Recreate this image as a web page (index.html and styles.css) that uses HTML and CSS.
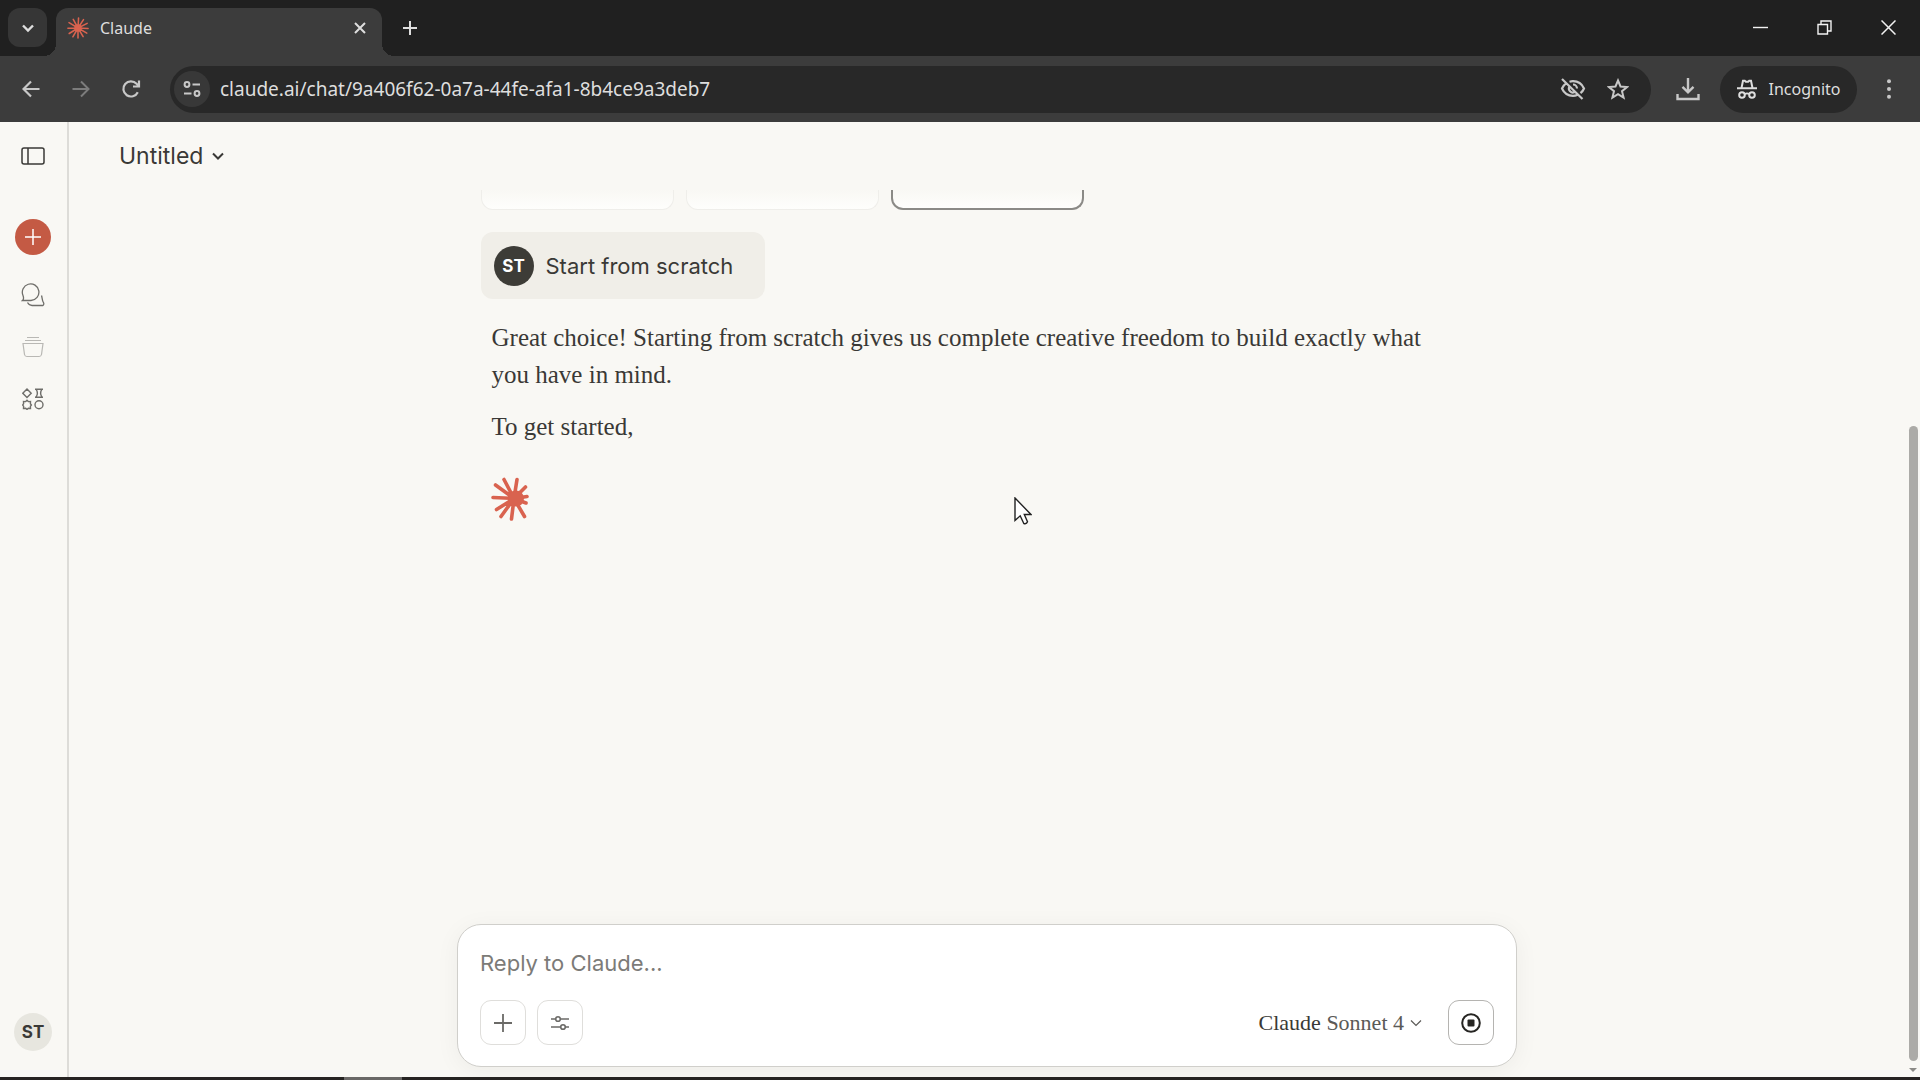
FILE: index.html
```html
<!DOCTYPE html>
<html lang="en">
<head>
    <meta charset="UTF-8">
    <meta name="viewport" content="width=device-width, initial-scale=1.0">
    <title>Claude</title>
    <link rel="stylesheet" href="styles.css">
</head>
<body>

    <!-- tab strip -->
    <header class="tab-strip">
        <button class="tab-search" aria-label="Search tabs">
            <svg width="14" height="14" viewBox="0 0 14 14"><path d="M2 4.5l5 5 5-5" stroke-width="2.4"/></svg>
        </button>
        <div class="tab">
            <svg class="burst" width="22" height="22" viewBox="0 0 24 24" stroke-width="1.7">
                <path d="M12 12L12.6 1M12 12L18 2.8M12 12L22 7M12 12L23 12.6M12 12L21.6 17.6M12 12L17.6 21.4M12 12L12 23M12 12L6.4 21.6M12 12L2.4 18M12 12L1 12.2M12 12L2.2 6.2M12 12L6.8 2.6"/>
                <circle cx="12" cy="12" r="4"/>
            </svg>
            <span class="tab-title">Claude</span>
            <button class="tab-close" aria-label="Close tab">
                <svg width="12" height="12" viewBox="0 0 12 12"><path d="M1 1l10 10M11 1L1 11" stroke-width="2"/></svg>
            </button>
        </div>
        <button class="new-tab" aria-label="New tab">
            <svg width="14" height="14" viewBox="0 0 14 14"><path d="M7 0v14M0 7h14" stroke-width="2"/></svg>
        </button>
        <div class="window-controls">
            <button aria-label="Minimize">
                <svg width="15" height="15" viewBox="0 0 15 15"><path d="M0 7.5h15" stroke-width="1.4"/></svg>
            </button>
            <button aria-label="Restore">
                <svg width="15" height="15" viewBox="0 0 15 15"><path d="M1 4.5h9.5V14H1zM4 4.5V1h10v10h-3.5" stroke-width="1.4"/></svg>
            </button>
            <button aria-label="Close">
                <svg width="15" height="15" viewBox="0 0 15 15"><path d="M.5.5l14 14M14.5.5l-14 14" stroke-width="1.5"/></svg>
            </button>
        </div>
    </header>

    <!-- toolbar -->
    <nav class="toolbar">
        <button class="tool" aria-label="Back">
            <svg width="18" height="18" viewBox="0 0 18 18"><path d="M17.5 9H2M9 1.5L1.5 9 9 16.5" stroke-width="2.2"/></svg>
        </button>
        <button class="tool disabled" aria-label="Forward" disabled>
            <svg width="18" height="18" viewBox="0 0 18 18"><path d="M.5 9H16M9 1.5L16.5 9 9 16.5" stroke-width="2"/></svg>
        </button>
        <button class="tool" aria-label="Reload">
            <svg width="20" height="20" viewBox="0 0 20 20"><path d="M16.8 13.2A7.6 7.6 0 1 1 15.6 4.8L18 7.2M18 1.5v6h-6" stroke-width="2.2"/></svg>
        </button>
        <div class="omnibox">
            <button class="site-info" aria-label="View site information">
                <svg width="18" height="18" viewBox="0 0 18 18" stroke-width="2"><circle cx="4" cy="4.5" r="2.4"/><path d="M9.5 4.5H17M1 13.5h7.5"/><circle cx="14" cy="13.5" r="2.4"/></svg>
            </button>
            <input type="text" aria-label="Address" value="claude.ai/chat/9a406f62-0a7a-44fe-afa1-8b4ce9a3deb7">
            <button class="box-icon" aria-label="Third-party cookies blocked">
                <svg width="26" height="24" viewBox="0 0 26 24" stroke-width="2.2"><path d="M2 2l20.5 20M9.5 4.7A12 12 0 0 1 13 4.2c5 0 9 2.8 11 7.3a12 12 0 0 1-3.5 4.7M6 6.3a12 12 0 0 0-4 5.2c2 4.5 6 7.3 11 7.3 1.5 0 3-.3 4.2-.8M13 7.5a4 4 0 0 1 4 4M9.2 10a4 4 0 0 0 5.2 5.2"/></svg>
            </button>
            <button class="box-icon" aria-label="Bookmark this tab">
                <svg width="22" height="22" viewBox="0 0 22 22" stroke-width="2"><path d="M11 2.5l2.5 6 6.5.5-5 4.2 1.6 6.4L11 16.2l-5.6 3.4L7 13.2 2 9l6.5-.5z"/></svg>
            </button>
        </div>
        <div class="toolbar-end">
            <button class="tool" aria-label="Downloads">
                <svg width="24" height="24" viewBox="0 0 24 24"><path d="M12 1v14M6.5 9.8L12 15.3l5.5-5.5M1.5 17v5h21v-5" stroke-width="2.4"/></svg>
            </button>
            <button class="incognito">
                <svg width="20" height="20" viewBox="0 0 20 20" stroke-width="2"><path d="M0 9.2h20M4.5 9L6 1.8h1.8l1 .9h2.4l1-.9H14L15.5 9M8 15.2c1-1 3-1 4 0"/><circle cx="5" cy="16" r="2.8"/><circle cx="15" cy="16" r="2.8"/></svg>
                Incognito
            </button>
            <button class="tool" aria-label="Menu">
                <svg class="solid" width="20" height="20" viewBox="0 0 20 20"><circle cx="10" cy="2.2" r="2"/><circle cx="10" cy="10" r="2"/><circle cx="10" cy="17.8" r="2"/></svg>
            </button>
        </div>
    </nav>

    <div class="app">
        <aside class="sidebar">
            <button class="toggle" aria-label="Open sidebar">
                <svg width="24" height="18" viewBox="0 0 24 18" stroke-width="1.5"><rect x="1" y="1" width="22" height="16" rx="2"/><path d="M7 1v16"/></svg>
            </button>
            <button class="new-chat" aria-label="New chat">
                <svg width="16" height="16" viewBox="0 0 16 16" stroke-width="1.5"><path d="M8 0v16M0 8h16"/></svg>
            </button>
            <a class="nav-item" href="#" aria-label="Chats">
                <svg width="24" height="24" viewBox="0 0 24 24" stroke-width="1.3"><path d="M1.5 17.5C3 16 2.6 14 2 12.5A8.3 8.3 0 1 1 10 17.5zM20.5 12.5c.9 2.5.4 5 2 7.2.7 1 0 2.5-.6 2.8H11c-2 0-3.5-1.3-4.5-3"/></svg>
            </a>
            <a class="nav-item faded" href="#" aria-label="Projects">
                <svg width="22" height="22" viewBox="0 0 22 22" stroke-width="1.2"><path d="M5 1.5h12M3 4.5h16M1 7.5h20l-1.5 11a2.5 2.5 0 0 1-2.5 2H5a2.5 2.5 0 0 1-2.5-2z"/></svg>
            </a>
            <a class="nav-item" href="#" aria-label="Artifacts">
                <svg width="22" height="22" viewBox="0 0 22 22" stroke-width="1.4"><path d="M5 1l4.2 4.2L5 9.4.8 5.2zM13 1.2h8M13 9.2h8M14 1.2c1.8 2.6 1.8 5.4 0 8M20 1.2c-1.8 2.6-1.8 5.4 0 8M5 12.3l1.3 1.3 2.2-.1-.1 2.2 1 1.3-1 1.2.1 2.2-2.2-.1L5 21.5l-1.3-1.2-2.2.1.1-2.2-1-1.2 1-1.3-.1-2.2 2.2.1z"/><circle cx="17" cy="16.8" r="4"/></svg>
            </a>
            <button class="account">ST</button>
        </aside>

        <main class="chat">
            <div class="chat-header">
                <button class="chat-title">
                    Untitled
                    <svg width="14" height="10" viewBox="0 0 14 10" stroke-width="2"><path d="M2 2.5l5 5 5-5"/></svg>
                </button>
            </div>

            <section class="messages">
                <div class="options">
                    <div class="option"></div>
                    <div class="option"></div>
                    <div class="option selected"></div>
                </div>
                <div class="user-message">
                    <span class="avatar">ST</span>
                    <p>Start from scratch</p>
                </div>
                <div class="reply">
                    <p>Great choice! Starting from scratch gives us complete creative freedom to build exactly what you have in mind.</p>
                    <p>To get started,</p>
                </div>
                <svg class="burst thinking" width="38" height="44" viewBox="0 0 38 44" stroke-width="3.6">
                    <path d="M23 21.5L13 2.5M23 21.5L26 2.5M23 21.5L34.5 10M23 21.5L36 19.5M23 21.5L35 26M23 21.5L33.5 39.5M23 21.5L20.5 42M23 21.5L10 39.5M23 21.5L5.5 32.5M23 21.5L2 20.5M23 21.5L4.5 8"/>
                    <circle cx="25" cy="21.5" r="8"/>
                </svg>
            </section>

            <form class="composer">
                <textarea rows="1" aria-label="Message" placeholder="Reply to Claude..."></textarea>
                <div class="composer-bar">
                    <button type="button" class="square" aria-label="Add content">
                        <svg width="18" height="18" viewBox="0 0 18 18" stroke-width="1.8"><path d="M9 0v18M0 9h18"/></svg>
                    </button>
                    <button type="button" class="square" aria-label="Search and tools">
                        <svg width="18" height="16" viewBox="0 0 18 16" stroke-width="1.6"><path d="M0 4h4.5M9.5 4H18M0 12h9.5M14.5 12H18"/><circle cx="7" cy="4" r="2.3"/><circle cx="12" cy="12" r="2.3"/></svg>
                    </button>
                    <button type="button" class="model" aria-haspopup="listbox">
                        <span><strong>Claude</strong> Sonnet 4</span>
                        <svg width="12" height="8" viewBox="0 0 12 8" stroke-width="1.2"><path d="M1 1.5l5 5 5-5"/></svg>
                    </button>
                    <button type="button" class="square stop" aria-label="Stop response">
                        <svg width="20" height="20" viewBox="0 0 20 20" stroke-width="2"><circle cx="10" cy="10" r="8.8"/><rect class="fill" x="6.5" y="6.5" width="7" height="7" rx="1"/></svg>
                    </button>
                </div>
            </form>
        </main>

        <div class="scrollbar">
            <div class="thumb"></div>
            <svg width="8" height="4" viewBox="0 0 8 4"><path d="M0 0h8L4 4z"/></svg>
        </div>
    </div>

    <footer class="taskbar"></footer>

    <svg class="cursor" width="18" height="28" viewBox="0 0 18 28"><path d="M1 1v22.5l5.2-4.7 3.6 7.7c1.5.5 3.2-.3 3.7-1.7L10.3 17.5H17z"/></svg>

</body>
</html>
```

FILE: styles.css
```css
:root {
    --frame: #202020;
    --toolbar: #3c3c3c;
    --field: #282828;
    --chrome-text: #dedede;
    --page: #f9f8f4;
    --line: #dddcd8;
    --ink: #3a3936;
    --muted: #7c7b78;
    --clay: #c45a44;
    --chrome: "Noto Sans", "Open Sans", sans-serif;
    --ui: Inter, Roboto, sans-serif;
    --serif: "Liberation Serif", "Times New Roman", serif;
}

* { box-sizing: border-box; margin: 0; padding: 0; }
body { display: flex; flex-direction: column; height: 100vh; overflow: hidden; background: var(--page); color: var(--ink); font-family: var(--ui); }
button, input, textarea { font: inherit; color: inherit; background: none; border: none; outline: none; }
button { display: flex; align-items: center; justify-content: center; flex: none; cursor: pointer; }
a { color: inherit; }
svg { flex: none; fill: none; stroke: currentColor; }

/* browser frame */
.tab-strip { display: flex; height: 56px; padding: 8px 0 0 8px; background: var(--frame); color: var(--chrome-text); font-family: var(--chrome); }
.tab-search { width: 39px; height: 39px; border-radius: 12px; background: #363636; }
.tab { position: relative; display: flex; align-items: center; width: 326px; height: 48px; margin-left: 9px; padding: 0 12px 8px 11px; border-radius: 12px 12px 0 0; background: var(--toolbar); }
.tab::before, .tab::after { content: ''; position: absolute; bottom: 0; width: 12px; height: 12px; }
.tab::before { right: 100%; background: radial-gradient(circle at 0 0, transparent 12px, var(--toolbar) 12px); }
.tab::after { left: 100%; background: radial-gradient(circle at 100% 0, transparent 12px, var(--toolbar) 12px); }
.burst { color: #d9634f; stroke-linecap: round; }
.burst circle { fill: currentColor; stroke: none; }
.tab-title { flex: 1; margin-left: 11px; font-size: 16px; }
.tab-close { width: 20px; height: 20px; }
.new-tab { width: 40px; height: 40px; margin-left: 8px; }
.window-controls { display: flex; height: 38px; margin-left: auto; color: #f2f2f2; }
.window-controls button { width: 64px; }

.toolbar { display: flex; align-items: center; gap: 10px; height: 66px; padding: 0 11px; background: var(--toolbar); color: #c8c8c8; font-family: var(--chrome); }
.tool { width: 40px; height: 40px; }
.disabled { color: #7c7c7c; }
.solid { fill: currentColor; stroke: none; }
.omnibox { display: flex; align-items: center; flex: 1; min-width: 0; height: 47px; margin-left: 9px; padding: 0 16px 0 4px; border-radius: 24px; background: var(--field); }
.site-info { width: 36px; height: 36px; border-radius: 50%; background: #383838; }
.omnibox input { flex: 1; min-width: 0; margin-left: 10px; color: var(--chrome-text); font-size: 19px; }
.box-icon { width: 34px; margin-left: 11px; }
.toolbar-end { display: flex; align-items: center; gap: 12px; margin-left: 7px; }
.incognito { gap: 12px; width: 137px; height: 47px; border-radius: 24px; background: var(--field); color: var(--chrome-text); font-size: 16px; }

/* page */
.app { display: flex; flex: 1; min-height: 0; }
.sidebar { display: flex; flex-direction: column; align-items: center; gap: 16px; width: 69px; padding: 16px 1px 26px 0; border-right: 2px solid var(--line); color: #6f6e6a; }
.toggle, .nav-item { display: flex; align-items: center; justify-content: center; width: 36px; height: 36px; }
.toggle { margin-bottom: 29px; color: var(--ink); }
.new-chat { width: 36px; height: 36px; margin-bottom: 6px; border-radius: 50%; background: var(--clay); color: #fff; }
.faded { color: #b9b8b4; }
.account { width: 38px; height: 38px; margin-top: auto; border-radius: 50%; background: #e7e6df; color: var(--ink); font-size: 17px; font-weight: 700; }

.chat { display: flex; flex-direction: column; flex: 1; min-width: 0; }
.chat-header { display: flex; align-items: center; height: 68px; padding: 0 50px; }
.chat-title { gap: 8px; font-size: 23px; }
.messages { flex: 1; min-height: 0; width: 100%; max-width: 1013px; margin: 0 auto; overflow: hidden; }
.options { display: flex; gap: 12px; height: 20px; }
.option { width: 193px; border: 1px solid #efeeea; border-top: none; border-radius: 0 0 12px 12px; background: linear-gradient(var(--page), #fefefc); }
.selected { border: 2px solid #8b8a86; border-top: none; }
.user-message { display: flex; align-items: center; gap: 12px; width: fit-content; height: 67px; margin-top: 22px; padding: 0 32px 0 13px; border-radius: 12px; background: #f0eee8; font-size: 22px; }
.avatar { display: flex; align-items: center; justify-content: center; width: 40px; height: 40px; border-radius: 50%; background: #3d3c37; color: #fff; font-size: 17px; font-weight: 700; }
.reply { padding: 20px 48px 0 11px; font-family: var(--serif); font-size: 25px; line-height: 37px; }
.reply p { margin-bottom: 15px; }
.thinking { display: block; margin: 32px 0 0 10px; }

.composer { width: calc(100% - 40px); max-width: 1060px; margin: 0 auto 10px; padding: 20px 22px 21px; border: 1px solid #d0cfcb; border-radius: 24px; background: #fff; box-shadow: 0 4px 24px rgba(0, 0, 0, 0.05); }
.composer textarea { display: block; width: 100%; height: 36px; resize: none; font-size: 22px; line-height: 36px; }
.composer textarea::placeholder { color: var(--muted); opacity: 1; }
.composer-bar { display: flex; align-items: center; gap: 11px; margin-top: 19px; }
.square { width: 46px; height: 45px; border: 1px solid #dfdedb; border-radius: 11px; color: #6b6a67; }
.stop { border-color: #b5b4b1; color: #262522; }
.fill { fill: currentColor; stroke: none; }
.model { gap: 6px; margin-left: auto; margin-right: 15px; color: #5b5a57; font-family: var(--serif); font-size: 22px; }
.model strong { font-weight: 400; color: var(--ink); }

.scrollbar { display: flex; flex-direction: column; align-items: center; width: 15px; padding: 304px 1px 5px 2px; }
.thumb { flex: 1; width: 9px; border-radius: 5px; background: #acaba7; }
.scrollbar svg { margin-top: 7px; fill: #8b8a86; stroke: none; }

.taskbar { height: 3px; background: linear-gradient(90deg, #262321 344px, #6a6866 344px, #6a6866 402px, #262321 402px); }

.cursor { position: absolute; left: 1014px; top: 497px; fill: #fff; stroke: #222; stroke-width: 1.4; }
```
